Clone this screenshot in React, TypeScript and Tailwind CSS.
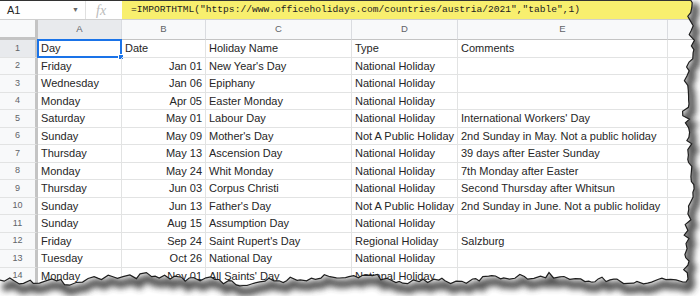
import React from "react";

const rows: string[][] = [
  ["Day", "Date", "Holiday Name", "Type", "Comments"],
  ["Friday", "Jan 01", "New Year's Day", "National Holiday", ""],
  ["Wednesday", "Jan 06", "Epiphany", "National Holiday", ""],
  ["Monday", "Apr 05", "Easter Monday", "National Holiday", ""],
  ["Saturday", "May 01", "Labour Day", "National Holiday", "International Workers' Day"],
  ["Sunday", "May 09", "Mother's Day", "Not A Public Holiday", "2nd Sunday in May. Not a public holiday"],
  ["Thursday", "May 13", "Ascension Day", "National Holiday", "39 days after Easter Sunday"],
  ["Monday", "May 24", "Whit Monday", "National Holiday", "7th Monday after Easter"],
  ["Thursday", "Jun 03", "Corpus Christi", "National Holiday", "Second Thursday after Whitsun"],
  ["Sunday", "Jun 13", "Father's Day", "Not A Public Holiday", "2nd Sunday in June. Not a public holiday"],
  ["Sunday", "Aug 15", "Assumption Day", "National Holiday", ""],
  ["Friday", "Sep 24", "Saint Rupert's Day", "Regional Holiday", "Salzburg"],
  ["Tuesday", "Oct 26", "National Day", "National Holiday", ""],
  ["Monday", "Nov 01", "All Saints' Day", "National Holiday", ""],
];

function makeRand(seed: number) {
  let s = seed;
  return () => {
    s = (s * 1103515245 + 12345) % 2147483648;
    return s / 2147483648;
  };
}

function tornPath() {
  const r = makeRand(42);
  const pts: [number, number][] = [];
  for (let y = -2; y <= 276; y += 3 + r() * 3) {
    const base = 689 + Math.sin(y / 23) * 3;
    pts.push([base + (r() - 0.5) * 7, y]);
  }
  pts.push([688, 279]);
  for (let x = 686; x >= -4; x -= 3 + r() * 4) {
    const base = 279 + Math.sin(x / 31) * 3 + Math.sin(x / 9) * 1;
    pts.push([x, base + (r() - 0.5) * 6]);
  }
  return pts;
}

function Torn() {
  const pts = tornPath();
  const line = "M" + pts.map((p) => `${p[0].toFixed(1)},${p[1].toFixed(1)}`).join(" L");
  const outside = line + " L-4,300 L704,300 L704,-4 Z";
  return (
    <svg className="absolute left-0 top-0" width={700} height={296} viewBox="0 0 700 296">
      <defs>
        <filter id="blur" x="-10%" y="-10%" width="120%" height="120%">
          <feGaussianBlur stdDeviation="3" />
        </filter>
        <clipPath id="outclip">
          <path d={outside} />
        </clipPath>
      </defs>
      <path d={outside} fill="#ffffff" />
      <g clipPath="url(#outclip)">
        <path d={line} transform="translate(3,6)" fill="none" stroke="#3a3a3a" strokeWidth={8} filter="url(#blur)" opacity={0.9} />
      </g>
      <path d={line} fill="none" stroke="#1e1e1e" strokeWidth={1.2} />
    </svg>
  );
}

const widths = ["w-[84px]", "w-[84px]", "w-[146px]", "w-[106px]", "w-[210px]"];

export default function App() {
  return (
    <div
      className="relative w-[700px] h-[296px] overflow-hidden bg-white text-[#262626]"
      style={{ fontFamily: '"Liberation Sans", Arial, sans-serif' }}
    >
      <div className="border-t border-[#333]">
        {/* formula bar */}
        <div className="flex h-[19px] border-b border-[#d0d0d0]">
          <div className="flex w-[86px] items-center justify-between border-r border-[#e0e0e0] pl-[7px] pr-[6px]">
            <span className="text-[11px]">A1</span>
            <span className="text-[7px] text-[#666]">▼</span>
          </div>
          <div className="flex w-[36px] items-center pl-[10px]">
            <span className="text-[14px] italic text-[#bbb]" style={{ fontFamily: '"Liberation Serif", serif' }}>
              fx
            </span>
          </div>
          <div className="flex flex-1 items-center bg-[#f8ef6e] pl-[9px]">
            <span className="text-[9.6px] text-[#222]" style={{ fontFamily: '"Liberation Mono", monospace' }}>
              =IMPORTHTML("https://www.officeholidays.com/countries/austria/2021","table",1)
            </span>
          </div>
        </div>
        {/* column headers */}
        <div className="flex h-[20px]">
          <div className="w-[38px] shrink-0 border-r-[3px] border-b-[3px] border-[#c4c4c4] bg-[#f8f9fa]" />
          {["A", "B", "C", "D", "E"].map((c, i) => (
            <div
              key={c}
              className={`${widths[i]} shrink-0 flex items-center justify-center border-r border-b border-r-[#dadce0] border-b-[#c4c4c4] text-[9.5px] text-[#5f6368] ${i === 0 ? "bg-[#e8eaed]" : "bg-[#f8f9fa]"}`}
            >
              {c}
            </div>
          ))}
          <div className="flex-1 border-b border-[#c4c4c4] bg-[#f8f9fa]" />
        </div>
        {/* rows */}
        {rows.map((r, ri) => (
          <div key={ri} className="flex h-[17.5px]">
            <div
              className={`w-[38px] shrink-0 flex items-center justify-center border-r-[3px] border-b border-r-[#c4c4c4] border-b-[#e2e3e3] text-[9px] text-[#5f6368] ${ri === 0 ? "bg-[#e8eaed]" : "bg-[#f8f9fa]"}`}
            >
              {ri + 1}
            </div>
            {r.map((v, ci) => (
              <div
                key={ci}
                className={`${widths[ci]} relative shrink-0 flex items-center overflow-visible whitespace-nowrap border-r border-b border-[#e2e3e3] px-[3px] text-[11px] ${ci === 1 && ri > 0 ? "justify-end" : ""}`}
              >
                {v}
                {ri === 0 && ci === 0 && (
                  <div className="absolute -left-[1px] -top-[1px] h-[19px] w-[85px] border-2 border-[#1a73e8]">
                    <div className="absolute -bottom-[4px] -right-[4px] h-[6px] w-[6px] border border-white bg-[#1a73e8]" />
                  </div>
                )}
              </div>
            ))}
            <div className="flex-1 border-b border-[#e2e3e3]" />
          </div>
        ))}
      </div>
      <Torn />
    </div>
  );
}
